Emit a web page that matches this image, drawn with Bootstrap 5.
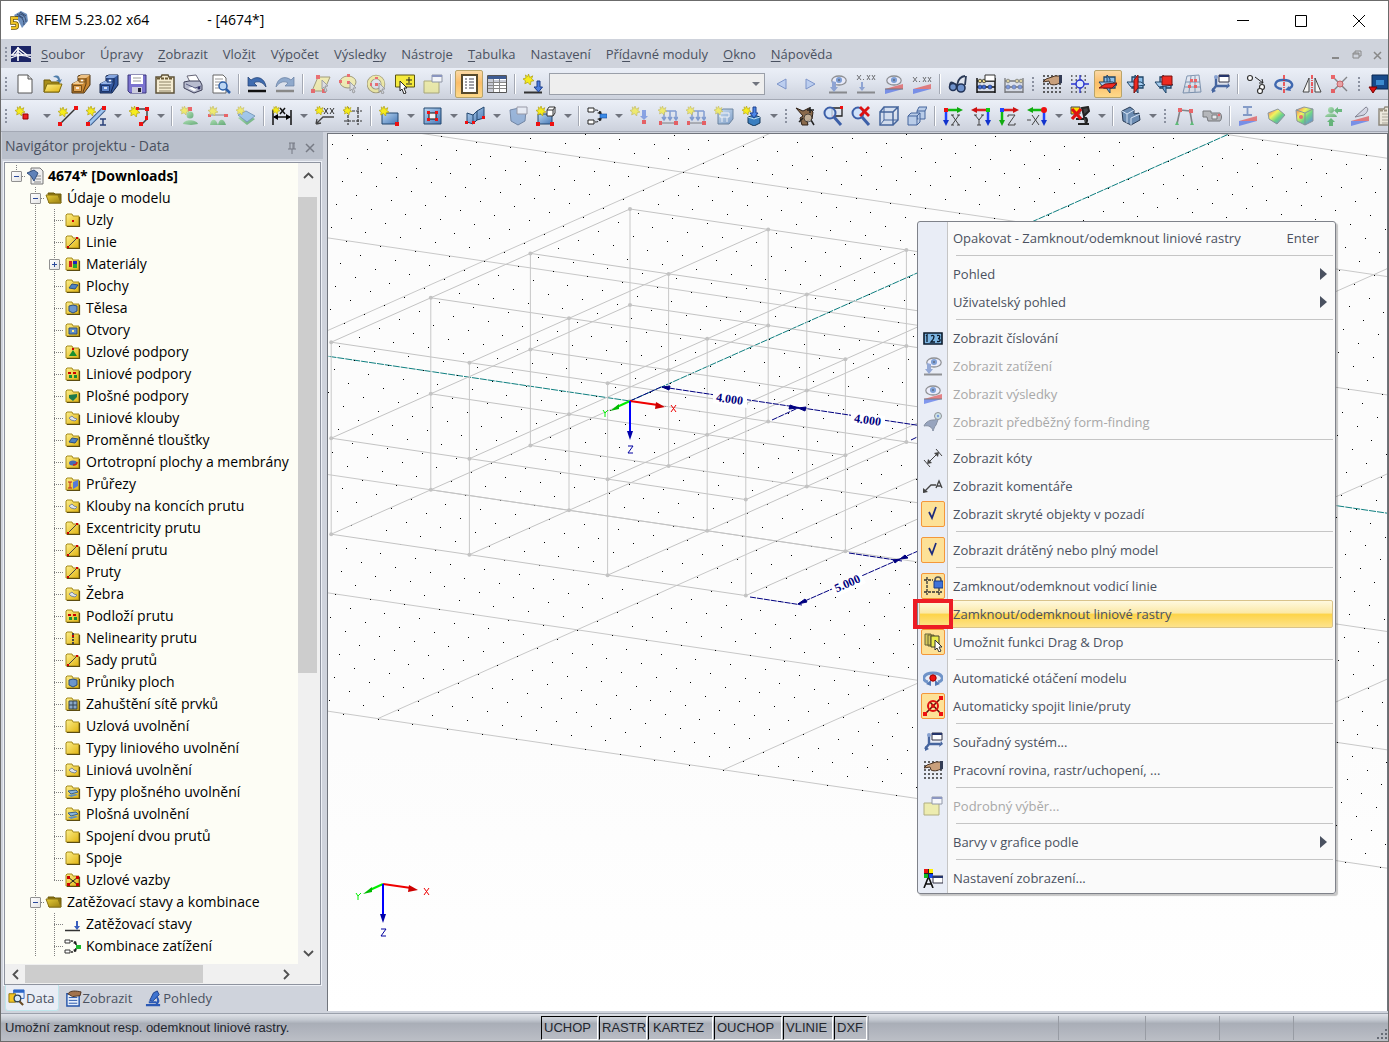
<!DOCTYPE html>
<html lang="cs">
<head>
<meta charset="utf-8">
<meta name="viewport" content="width=device-width, initial-scale=1">
<title>RFEM 5.23.02 x64 - [4674*]</title>
<link href="https://cdn.jsdelivr.net/npm/bootstrap@5.3.0/dist/css/bootstrap.min.css" rel="stylesheet">
<style>
:root{--ink:#4a5160;--face:#cfd3dc;--line:#8e939f}
body{font-family:"Open Sans","Noto Sans",sans-serif;font-size:14px;line-height:20px;color:#000;background:var(--face)}
button{font:inherit;color:inherit;background:none;border:0;padding:0}
.art-store{position:absolute;width:0;height:0}
.app-window{height:100vh;border:1px solid #6b6b6b;overflow:hidden}
.title-bar{height:38px;background:#fff;padding-left:8px}
.title-bar .app-mark{margin-right:6px}
.title-bar .doc-name{margin-left:58px}
.win-btn{width:58px;height:36px}
.menu-strip{height:29px;background:var(--face);color:var(--ink);font-size:13px}
.menu-strip a{color:inherit;text-decoration:none}
.menu-strip u{text-underline-offset:2px}
.menu-links{gap:15px;margin-left:10px}
.mdi-btn{width:21px;height:20px}
.grip-dots{flex:none;width:10px;height:16px;background:radial-gradient(circle,#8b91a0 1px,transparent 1px) 3px 0/4px 4px repeat-y}
.tool-row{height:32px;background:linear-gradient(#ebeff7,#dfe4ee 45%,#ccd1dc);border-bottom:1px solid #a4a9b5;overflow:hidden}
.tool-row .tool-btn{flex:none;width:28px;height:28px;border:1px solid transparent;border-radius:2px}
.tool-btn svg{width:20px;height:20px;display:block;margin:auto}
.tool-btn.is-on{border-color:#b9a46a;background:linear-gradient(#fbd9a6,#fbbd68 45%,#fdd98a)}
.tool-btn.is-off{opacity:.6}
.tool-arrow{flex:none;width:15px;height:28px;display:flex;align-items:center;justify-content:center}
.tool-arrow::after{content:"";border:4px solid transparent;border-top-color:#70747e;border-bottom:0}
.tool-sep{flex:none;width:8px;height:20px;background:linear-gradient(#a4a9b4,#a4a9b4) 3px 0/1px 100% no-repeat,linear-gradient(#fff,#fff) 4px 0/1px 100% no-repeat}
.case-wrap{flex:none;position:relative;height:22px}
.case-wrap::after{content:"";position:absolute;right:8px;top:9px;border:4px solid transparent;border-top-color:#70747e;border-bottom:0;pointer-events:none}
.case-box{display:block;width:216px;height:22px;margin:0 3px 0 2px;border:1px solid #9a9fa9;border-radius:0;background:#eee;appearance:none}
.nav-pane{flex:none;width:322px;margin-right:4px;padding-left:1px}
.nav-head{height:27px;background:#b9bfca;color:var(--ink);padding:0 4px 0 3px}
.nav-head button{width:18px;height:18px}
.tree-frame{border:1px solid #8e939f;outline:1px solid #eef1f7;margin:3px 2px 0 2px;background:#f0f0f0;min-height:0}
.tree-list{background:#fdfdf5;padding:2px 0 0 2px;overflow:hidden;min-width:0}
.tree-line{height:22px;display:flex;align-items:center;white-space:nowrap}
.twig{flex:none;width:19px;height:22px;display:flex;align-items:center;justify-content:center}
.twig.vert{background:repeating-linear-gradient(#808080 0 1px,transparent 1px 2px) 9px 0/1px 100% no-repeat}
.twig.fork{background:repeating-linear-gradient(#808080 0 1px,transparent 1px 2px) 9px 0/1px 100% no-repeat,repeating-linear-gradient(90deg,#808080 0 1px,transparent 1px 2px) 9px 11px/10px 1px no-repeat}
.twig.stop{background:repeating-linear-gradient(#808080 0 1px,transparent 1px 2px) 9px 0/1px 12px no-repeat,repeating-linear-gradient(90deg,#808080 0 1px,transparent 1px 2px) 9px 11px/10px 1px no-repeat}
.twig button{width:11px;height:11px;border:1px solid #919191;border-radius:1px;background:linear-gradient(#2b4a9b,#2b4a9b) 2px 4px/5px 1px no-repeat,linear-gradient(135deg,#fff,#e4e4e4)}
.twig button.shut{background:linear-gradient(#2b4a9b,#2b4a9b) 2px 4px/5px 1px no-repeat,linear-gradient(#2b4a9b,#2b4a9b) 4px 2px/1px 5px no-repeat,linear-gradient(135deg,#fff,#e4e4e4)}
.tree-line svg{flex:none;width:18px;height:18px;margin-right:4px}
.scroll-v{flex:none;width:22px}
.scroll-v .thumb{height:476px;margin-right:3px;background:#cdcdcd}
.scroll-v .step-up{height:34px;padding-bottom:10px}
.scroll-h{flex:none;height:20px;margin-right:24px}
.scroll-h .thumb{height:18px;width:178px;background:#cdcdcd}
.chev{flex:none;width:20px;height:22px;display:flex;align-items:center;justify-content:center}
.nav-tabs-row{height:28px;color:var(--ink);padding-left:3px;font-size:13px}
.nav-tabs-row button{height:26px;padding:0 3px 0 2px;display:flex;align-items:center;gap:1px;border-radius:0 0 3px 3px}
.nav-tabs-row button.is-on{background:#e9edf5;border:1px solid #bfe6ec;border-top:0}
.nav-tabs-row svg{width:17px;height:17px}
.canvas-pane{min-width:0;position:relative;border:1px solid #70747c;border-width:1px 1px 0 1px;margin:1px 0 2px;background:linear-gradient(#fcfcfc 70%,#fff)}
.canvas-pane>svg{display:block;width:100%;height:100%}
.ctx-menu{position:absolute;left:589px;top:87px;width:419px;border:1px solid #7f828a;border-radius:3px;padding:2px 2px 1px 1px;color:var(--ink);font-size:13px;background:linear-gradient(90deg,#e9edf6 29px,#c5c5c5 29px,#c5c5c5 30px,#fafafa 30px);box-shadow:2px 2px 1px rgba(0,0,0,.22)}
.ctx-item{display:flex;align-items:center;width:100%;height:28px;padding:0 13px 0 1px;border:1px solid transparent;border-radius:2px;text-align:left;line-height:20px}
.ctx-item:disabled{color:#a8a8a8}
.ctx-ico{flex:none;width:24px;height:26px;margin-right:8px;display:flex;align-items:center;justify-content:center;border:1px solid transparent;border-radius:2px}
.ctx-ico svg{flex:none;width:20px;height:20px}
.ctx-item:disabled svg{opacity:.6}
.ctx-ico.is-set{background:#fde197;border-color:#f4973a}
.ctx-item.is-hot{background:linear-gradient(#fff9df,#fbe9a8 45%,#fdd44a 52%,#fde38c);border-color:#d9c38a}
.ctx-sub{width:0;height:0;border:6px solid transparent;border-left:7px solid var(--ink);border-right:0;margin-right:-8px}
.ctx-sep{height:8px;margin-left:37px;background:linear-gradient(#c5c5c5,#c5c5c5) 0 3px/100% 1px no-repeat}
.mark-box{position:absolute;left:585px;top:465px;width:40px;height:30px;border:4px solid #ed1c24}
.status-strip{height:28px;font-family:"Liberation Sans",Arial,sans-serif;font-size:13px;color:#22262e;background:linear-gradient(#dfe2e8,#c3c8d0 22%,#a9aeb7 35%,#b0b4bd 60%,#bcbfc6);border-top:1px solid #9aa0ab}
.status-text{width:540px;padding-left:4px}
.snap-key{height:24px;line-height:18px;border:1px solid #000;border-right-color:#fff;border-bottom-color:#fff;overflow:hidden;white-space:nowrap;text-align:left;padding-left:2px;margin-right:1px}
.status-cell{height:24px;border-left:1px solid #989ca4}
</style>
</head>
<body>
<svg class="art-store" aria-hidden="true">
<defs>
<linearGradient id="gy" x2="1" y2="1"><stop stop-color="#fdf08c"/><stop offset="1" stop-color="#e0b310"/></linearGradient>
<linearGradient id="gd" x2="1" y2="1"><stop stop-color="#e6cc3a"/><stop offset="1" stop-color="#9c8010"/></linearGradient>
<linearGradient id="gb" x2="1" y2="1"><stop stop-color="#b9d6f2"/><stop offset="1" stop-color="#4778b5"/></linearGradient>
<linearGradient id="gr" x2="1" y2="1"><stop stop-color="#f00"/><stop offset=".35" stop-color="#ff0"/><stop offset=".6" stop-color="#2c4"/><stop offset="1" stop-color="#23f"/></linearGradient>
<linearGradient id="gg" x2="1" y2="1"><stop stop-color="#8fe08f"/><stop offset="1" stop-color="#1e8a33"/></linearGradient>
</defs>
<symbol id="star" viewBox="0 0 9 9"><path d="M4.500 0 5.500 2.800 8 1.500 7 4 9 5.500 6.500 6 6 9 4 6.800 1.500 8 2 5.500 0 4 2.500 3.300 2 .8 3.800 2.200Z" fill="#f6ec1b" stroke="#b0a010" stroke-width=".6"/></symbol>
<symbol id="eye" viewBox="0 0 20 12"><ellipse cx="10" cy="6" rx="8" ry="5" fill="#eef" stroke="#555" stroke-width="1.400"/><circle cx="10" cy="5.500" r="3.400" fill="#3b6fc4"/><circle cx="10" cy="5.500" r="1.200" fill="#124"/></symbol>
<symbol id="cabo" viewBox="0 0 20 20"><path d="M1 10 7 7V2l3-1h9v10l-6 8H1Z" fill="#c98733" stroke="#4c3210"/><path d="m7 3 3-2h9l-4 3H7Z" fill="#ecc083"/><path d="m1 10 5-3h8l-2 3Z" fill="#f2cd94"/><path d="M15 4v6l-3 8" stroke="#5c3c12" fill="none"/><path d="M8 5h6v3H8ZM2.500 11.500h8v6h-8Z" fill="#e0a558" stroke="#7a5018"/><path d="M5 14h3M10 6.500h2" stroke="#fff" stroke-width="1.500"/></symbol>
<symbol id="cabb" viewBox="0 0 20 20"><path d="M1 10 7 7V2l3-1h9v10l-6 8H1Z" fill="#34589f" stroke="#12244c"/><path d="m7 3 3-2h9l-4 3H7Z" fill="#86a6de"/><path d="m1 10 5-3h8l-2 3Z" fill="#97b4e6"/><path d="M15 4v6l-3 8" stroke="#12244c" fill="none"/><path d="M8 5h6v3H8ZM2.500 11.500h8v6h-8Z" fill="#5d83c8" stroke="#1c3468"/><path d="M5 14h3M10 6.500h2" stroke="#fff" stroke-width="1.500"/></symbol>
<symbol id="app" viewBox="0 0 20 20"><path d="M5 5 12 1l6 3 1 7-6 7-4-8Z" fill="#6d8fbd"/><path d="M8 4l6 4M11 2l6 4M6 7c5-2 9 1 9 8M10 4c4 0 7 3 7 8" stroke="#32466b" fill="none"/><path d="M9 8H3v5h3c3 0 3 5 0 5H2" fill="none" stroke="#6b5200" stroke-width="3.600"/><path d="M9 8H3v5h3c3 0 3 5 0 5H2" fill="none" stroke="#eec426" stroke-width="2.200"/></symbol>
<symbol id="bridge" viewBox="0 0 20 16"><path d="M0 0h20v16H0Z" fill="#1c2566"/><path d="M7 1v14M0 9h20" stroke="#fff" stroke-width="1.600"/><path d="M0 12c6-3 14-3 20 0M7 2 1 9M7 2l9 7M7 5l-3 4M7 5l5 4" stroke="#fff" stroke-width="1.200" fill="none"/></symbol>
<symbol id="new" viewBox="0 0 20 20"><path d="M3 1h10l4 4v14H3Z" fill="#fff" stroke="#555"/><path d="M13 1v4h4" fill="#ddd" stroke="#555"/></symbol>
<symbol id="open" viewBox="0 0 20 20"><path d="M1 6h6l1 2h8v10H1Z" fill="#a98f1a" stroke="#6e5b08"/><path d="M4 10h15l-3 8H1Z" fill="url(#gy)" stroke="#7e6a0c"/><path d="M10 3c4-3 7-1 7 3l2-1-2 4-4-3h2c0-2-2-3-5-3Z" fill="#4f7dab"/></symbol>
<symbol id="save" viewBox="0 0 20 20"><path d="M1 1h18v18H3l-2-2Z" fill="#7b73cf" stroke="#3b367d"/><path d="M4 1h12v9H4Z" fill="#fff"/><path d="M6 4h8M6 7h8" stroke="#999"/><path d="M5 13h10v6H5Z" fill="#ccd"/><path d="M11 14h3v4h-3Z" fill="#223"/></symbol>
<symbol id="note" viewBox="0 0 20 20"><path d="M1 3h5l1-2h6l1 2h5v16H1Z" fill="#f5ecd2" stroke="#5d5138" stroke-width="1.500"/><path d="M2 4.500h16" stroke="#6b5a34" stroke-width="2" stroke-dasharray="3 1"/><path d="M4 8h12M4 11h12M4 14h12M4 17h12" stroke="#8c8267"/></symbol>
<symbol id="print" viewBox="0 0 20 20"><path d="M4 2l9-1 4 7H7Z" fill="#fff" stroke="#667"/><path d="M1 8l5-1h11l2 4v5l-8 3-10-5Z" fill="#b8bccf" stroke="#3e4058"/><path d="M3 10l9 4 6-2" stroke="#555a80" fill="none"/><path d="M5 14l6 3 3-1-5-3Z" fill="#fff"/><circle cx="16" cy="14" r="1.500" fill="#336"/></symbol>
<symbol id="prev" viewBox="0 0 20 20"><path d="M2 1h10l3 3v15H2Z" fill="#fff" stroke="#666"/><path d="M4 5h8M4 8h8M4 11h5M4 14h5" stroke="#999"/><circle cx="12" cy="12" r="4" fill="#bcd6f3" stroke="#2c5fa8" stroke-width="1.500"/><path d="m15 15 4 4" stroke="#2c5fa8" stroke-width="2.500"/></symbol>
<symbol id="undo" viewBox="0 0 20 20"><path d="M1 3v9h9L7 9c3-2 8-2 12 4C18 4 10 1 4 6Z" fill="#3f6cb0" stroke="#1f3d70" stroke-width=".7"/><path d="M1 17h18" stroke="#111" stroke-width="2.500"/></symbol>
<symbol id="redo" viewBox="0 0 20 20"><path d="M19 3v9h-9l3-3C10 7 5 7 1 13 2 4 10 1 16 6Z" fill="#8fa9cc" stroke="#6880a2" stroke-width=".7"/><path d="M1 17h18" stroke="#888" stroke-width="2.500"/></symbol>
<symbol id="selp" viewBox="0 0 20 20"><path d="M7 3h12l-6 14H1Z" fill="#f8ee8d" stroke="#776c30"/><path d="M5 1h4v4H5ZM0 15h4v4H0ZM11 15h4v4h-4Z" fill="#e22"/><path d="m11 6 6 6h-3l2 5-2 1-1-5-2 2Z" fill="#ddd" stroke="#777"/></symbol>
<symbol id="sele" viewBox="0 0 20 20"><ellipse cx="9" cy="8" rx="8" ry="6" fill="#f8ee8d" stroke="#776c30"/><path d="M8 7h3v3H8ZM0 6h3v3H0ZM8 0h3v3H8Z" fill="#e22"/><path d="m11 8 6 6h-3l2 4-2 1-1-4-2 2Z" fill="#ddd" stroke="#777"/></symbol>
<symbol id="selr" viewBox="0 0 20 20"><circle cx="9" cy="10" r="7" fill="none" stroke="#776c30" stroke-width="4.500"/><circle cx="9" cy="10" r="7" fill="none" stroke="#f4e97a" stroke-width="3"/><path d="M8 9h3v3H8ZM3 9h2v3H3ZM8 3h3v2H8Z" fill="#e22"/><path d="m12 9 6 6h-3l2 4-2 1-1-4-2 2Z" fill="#ddd" stroke="#777"/></symbol>
<symbol id="selx" viewBox="0 0 20 20"><path d="M.5 1h19v12H.5Z" fill="#f5ea3c" stroke="#5a5412"/><path d="M14 3v6M11 6h6M11 10h6" stroke="#222"/><path d="m5 7 7 7H9l2 5-2 1-2-5-2 2Z" fill="#fff" stroke="#222"/></symbol>
<symbol id="selw" viewBox="0 0 20 20"><path d="M1 7h15v12H1Z" fill="#f1ec80" stroke="#8b8637"/><path d="M9 1h10v7H9Z" fill="#fff" stroke="#5b6276"/><path d="M9 1h10v2H9Z" fill="#4f5f9e"/></symbol>
<symbol id="list" viewBox="0 0 20 20"><path d="M3 1h15v18H3Z" fill="#fff" stroke="#584a2c" stroke-width="2"/><path d="M6 5h2M6 8h2M6 11h2M6 14h2M10 5h5M10 8h5M10 11h5M10 14h5" stroke="#445"/></symbol>
<symbol id="tabl" viewBox="0 0 20 20"><path d="M.5 1.500h19v17H.5Z" fill="#fff" stroke="#555"/><path d="M1 2h18v3H1Z" fill="#3e5c93"/><path d="M1 5h5v13H1ZM1 6h18v2H1Z" fill="#c9ccd6"/><path d="M1 8.500h18M1 11.500h18M1 14.500h18M6.500 5v13M12.500 5v13" stroke="#888"/></symbol>
<symbol id="ldnew" viewBox="0 0 20 20"><use href="#star" x="0" width="11" height="11"/><path d="M1 18.500h18" stroke="#333" stroke-width="2"/><path d="M14 7v6h-3l4.500 5 4-5H17V7Z" fill="#4a7de0" stroke="#1d3f8c"/></symbol>
<symbol id="pv" viewBox="0 0 20 20"><path d="M14 5v10l-9-5Z" fill="#a7c2f2" stroke="#3e62b4"/></symbol>
<symbol id="nx" viewBox="0 0 20 20"><path d="M6 5v10l9-5Z" fill="#a7c2f2" stroke="#3e62b4"/></symbol>
<symbol id="eyel" viewBox="0 0 20 20"><use href="#eye" x="2" y="1" width="18" height="11"/><path d="M1 18.500h18" stroke="#555" stroke-width="2"/><path d="M4 7v6H2l4 5 4-5H8V8Z" fill="#5c7cc4"/></symbol>
<symbol id="xxl" viewBox="0 0 20 20"><path d="m1 1 4 5M5 1 1 6M11 1l3 5M14 1l-3 5M16 1l3 5M19 1l-3 5M7 5.500h1" stroke="#222"/><path d="M1 18.500h18" stroke="#555" stroke-width="2"/><path d="M5 8v5H3l3 4 3-4H7V8Z" fill="#5c7cc4"/></symbol>
<symbol id="eyer" viewBox="0 0 20 20"><use href="#eye" x="1" y="1" width="18" height="11"/><path d="M1 15h18v-5Z" fill="#e23b3b"/><path d="M1 15h18L1 20Z" fill="#3c5fe8"/><path d="M1 15h18" stroke="#333"/></symbol>
<symbol id="xxr" viewBox="0 0 20 20"><path d="m1 3 4 5M5 3 1 8M11 3l3 5M14 3l-3 5M16 3l3 5M19 3l-3 5M7 7.500h1" stroke="#222"/><path d="M1 15h18v-5Z" fill="#e23b3b"/><path d="M1 15h18L1 20Z" fill="#3c5fe8"/></symbol>
<symbol id="glas" viewBox="0 0 20 20"><path d="M2 12c0-8 6 0 7-1s0-8 8-9M18 2l-1 9" fill="none" stroke="#2b3a57" stroke-width="1.800"/><circle cx="5" cy="13" r="3.500" fill="#6f92cc" stroke="#223458" stroke-width="1.600"/><circle cx="13" cy="14" r="4" fill="#6f92cc" stroke="#223458" stroke-width="1.600"/></symbol>
<symbol id="abac" viewBox="0 0 20 20"><path d="M1 4v15M19 4v15M1 7h18M1 13h18M1 18h18" stroke="#111" stroke-width="1.500"/><g fill="#3f6cd6" stroke="#14285e" stroke-width=".6"><circle cx="4" cy="13" r="2"/><circle cx="8" cy="13" r="2"/><circle cx="14" cy="13" r="2"/></g><g fill="#f0dc8c" stroke="#554"><circle cx="4" cy="7" r="1.800"/><circle cx="8" cy="7" r="1.800"/></g><path d="M9 1h10v6H9Z" fill="#fff" stroke="#333"/></symbol>
<symbol id="abac2" viewBox="0 0 20 20"><path d="M1 4v15M19 4v15M1 7h18M1 13h18M1 18h18" stroke="#333" stroke-width="1.300"/><g fill="#3f6cd6" stroke="#14285e" stroke-width=".6"><circle cx="4" cy="13" r="2"/><circle cx="10" cy="13" r="2"/><circle cx="16" cy="13" r="2"/></g><g fill="#d8c46c" stroke="#554"><circle cx="4" cy="7" r="1.800"/><circle cx="13" cy="7" r="1.800"/><circle cx="17" cy="7" r="1.800"/></g></symbol>
<symbol id="hand" viewBox="0 0 20 20"><path d="M1 2h18M1 6h18M1 10h18M1 14h18M1 18h18" stroke="#333" stroke-width="1.600" stroke-dasharray="2 2"/><path d="M20 2 13 2 4 5l-3 3 6-1 1 3c4 2 8 0 12-2Z" fill="#c9a07c" stroke="#4a3424"/><path d="M17 1h3v8l-3 1Z" fill="#333c55"/></symbol>
<symbol id="snap" viewBox="0 0 20 20"><path d="M1 2h18M1 6h18M1 14h18M1 18h18" stroke="#444" stroke-width="1.500" stroke-dasharray="1.500 3"/><path d="M10 1v18M1 10h18" stroke="#2b36d0" stroke-width="1.300"/><circle cx="10" cy="10" r="4" fill="#dfe9fb" stroke="#2b36d0" stroke-width="1.500"/></symbol>
<symbol id="pl" viewBox="0 0 20 20"><path d="M6 3h11v11H6Z" fill="#8fc0ea" stroke="#1f4467" stroke-width="1.300"/><path d="M9 1 12 5v14l-3-4Z" fill="#6ea6da" stroke="#1f4467"/><path d="m1 8 14 0 4 3-14 2Z" fill="#a5cdf0" stroke="#1f4467"/></symbol>
<symbol id="plh" viewBox="0 0 20 20"><use href="#pl"/><path d="m1 14 6-4 12-1-5 5Z" fill="#ee2b22" stroke="#7a1210"/></symbol>
<symbol id="plv" viewBox="0 0 20 20"><use href="#pl"/><path d="m8 6 4-5v13l-4 5Z" fill="#ee2b22" stroke="#7a1210"/></symbol>
<symbol id="plf" viewBox="0 0 20 20"><use href="#pl"/><path d="M8 2h10v9H8Z" fill="#ee2b22" stroke="#7a1210"/></symbol>
<symbol id="grd" viewBox="0 0 20 20"><path d="m1 19 4-17 12-1 2 17ZM4 8h14M3 13h15M9 2 7 18M13 2v16" fill="none" stroke="#3f6088"/><path d="M8 5h3v3H8ZM6 11h3v3H6ZM12 11h3v3h-3ZM12 5h3v3h-3Z" fill="#e11"/></symbol>
<symbol id="axes" viewBox="0 0 20 20"><path d="M6 3v9l-4 5M6 12h11" stroke="#46659f" stroke-width="2.400" fill="none"/><path d="M2 19v-5l4 3ZM18 9l2 3-4 3Z" fill="#46659f"/><circle cx="6" cy="3" r="2" fill="#87a1d0"/><path d="M9 1h10v7H9Z" fill="#fff" stroke="#334"/><path d="M9 1h10v2H9Z" fill="#25356b"/></symbol>
<symbol id="cir" viewBox="0 0 20 20"><g fill="#fff" stroke="#333" stroke-width="1.200"><circle cx="4" cy="4" r="2.500"/><circle cx="16" cy="13" r="2.500"/><circle cx="14" cy="17" r="2.500"/></g><path d="m9 3 8 6M17 9l-1-4M17 9h-4" stroke="#222" fill="none"/></symbol>
<symbol id="rot" viewBox="0 0 20 20"><path d="M8 15C-2 14 0 6 9 6c10 0 12 7 5 9" fill="none" stroke="#3f68b0" stroke-width="2.400"/><path d="m15 12-4 4 6 1Z" fill="#3f68b0"/><path d="M10 1v18" stroke="#e11" stroke-width="1.300" stroke-dasharray="4 1 1 1"/></symbol>
<symbol id="mir" viewBox="0 0 20 20"><path d="M10 1v18" stroke="#e11" stroke-width="1.300" stroke-dasharray="4 1 1 1"/><path d="M7 4v14H1ZM13 4v14h6Z" fill="#f5f5f5" stroke="#444"/></symbol>
<symbol id="tie" viewBox="0 0 20 20"><path d="M3 3l7 7 7-7M3 17l7-7 7 7" stroke="#444" stroke-width="1.400" fill="none"/><path d="M1 1h4v4H1ZM1 15h4v4H1Z" fill="#e11"/><circle cx="10" cy="10" r="3" fill="#e77" stroke="#b11"/></symbol>
<symbol id="scr" viewBox="0 0 20 20"><path d="M4 1h16v14H4Z" fill="#174a8a" stroke="#0b2750"/><path d="M8 6h8v5H8Z" fill="#3b8bd0"/><path d="M1 13h8l-4 6Z" fill="#d11" stroke="#700"/></symbol>
<symbol id="nod" viewBox="0 0 20 20"><use href="#star" width="10" height="10"/><path d="M8 8h5v5H8Z" fill="#e22" stroke="#900"/></symbol>
<symbol id="lin" viewBox="0 0 20 20"><use href="#star" y="1" width="10" height="10"/><path d="M2 18 18 2" stroke="#333" stroke-width="1.500"/><path d="M0 16h4v4H0ZM16 0h4v4h-4Z" fill="#e11"/></symbol>
<symbol id="mem" viewBox="0 0 20 20"><path d="M3 18 18 3" stroke="#3c5d8e" stroke-width="5"/><path d="M3 18 18 3" stroke="#9fc4ee" stroke-width="3"/><use href="#star" width="10" height="10"/><path d="M0 16h4v4H0ZM16 0h4v4h-4Z" fill="#e11"/><path d="M14 13h6M14 19h6M17 13v6" stroke="#2a417a" stroke-width="1.500"/></symbol>
<symbol id="ply" viewBox="0 0 20 20"><path d="M7 3h11v10l-5 5" stroke="#444" stroke-width="1.500" fill="none"/><use href="#star" width="11" height="11"/><path d="M7 1h3v3H7ZM16 1h4v4h-4ZM16 10h3v4h-3ZM10 16h4v4h-4Z" fill="#e11"/></symbol>
<symbol id="sup" viewBox="0 0 20 20"><path d="M8 1h4v4H8Z" fill="#e11"/><circle cx="10" cy="9" r="3.500" fill="url(#gg)"/><path d="M3 18c1-5 13-5 15 0l-7 1Z" fill="url(#gg)"/><use href="#star" width="9" height="9"/></symbol>
<symbol id="sul" viewBox="0 0 20 20"><path d="M1 9h18" stroke="#555"/><path d="M0 8h3v3H0ZM16 8h4v3h-4Z" fill="#e11"/><path d="M2 19c1-7 6-7 8 0ZM10 19c1-7 6-7 8 0Z" fill="url(#gg)"/><use href="#star" width="10" height="10"/></symbol>
<symbol id="suf" viewBox="0 0 20 20"><path d="m2 12 8-4 9 5-8 6Z" fill="url(#gg)"/><path d="m2 9 8-4 9 5-8 6Z" fill="#7bb4e6" stroke="#3b6f9f"/><use href="#star" width="9" height="9"/></symbol>
<symbol id="dim" viewBox="0 0 20 20"><path d="M1 4v15M19 4v15M2 11h16" stroke="#111" stroke-width="1.500"/><path d="m1 11 5-3v6ZM19 11l-5-3v6Z"/><path d="m8 2 5 6M13 2 8 8" stroke="#111" stroke-width="1.500"/><use href="#star" width="8" height="8"/></symbol>
<symbol id="com" viewBox="0 0 20 20"><path d="m1 18 7-7h11M1 18l1-5M1 18l5-1" stroke="#444" fill="none" stroke-width="1.300"/><path d="m9 2 4 6M13 2 9 8M15 2l4 6M19 2l-4 6" stroke="#333"/><use href="#star" width="9" height="9"/></symbol>
<symbol id="gui" viewBox="0 0 20 20"><path d="M5 1v18M15 1v18M1 5h18M1 15h18" stroke="#333" stroke-width="1.200" stroke-dasharray="3 1"/><use href="#star" width="9" height="9"/></symbol>
<symbol id="surf" viewBox="0 0 20 20"><path d="M3 7h16v11H3Z" fill="url(#gb)" stroke="#23466e"/><use href="#star" width="10" height="10"/><path d="M16 16h4v4h-4Z" fill="#e11"/></symbol>
<symbol id="opn" viewBox="0 0 20 20"><path d="M2 2h17v16H2Z" fill="url(#gb)" stroke="#23466e"/><path d="M7 7h7v6H7Z" fill="#f1f3f8" stroke="#111"/><path d="M5 5h3v3H5ZM13 5h3v3h-3ZM5 12h3v3H5ZM13 12h3v3h-3Z" fill="#e11"/></symbol>
<symbol id="bend" viewBox="0 0 20 20"><path d="m2 7 6 2 4-4 7-4v11l-7 2-4 4-6-2Z" fill="url(#gb)" stroke="#23466e"/><path d="M8 9v8M12 5v9" stroke="#23466e"/><path d="M0 15h3v3H0ZM7 15h3v3H7ZM17 10h3v3h-3Z" fill="#e11"/></symbol>
<symbol id="sol" viewBox="0 0 20 20"><path d="m2 4 9-2 7 2-1 11-7 4-7-4Z" fill="#6c96cc" stroke="#2f4c78"/><path d="M9 1h10v7H9Z" fill="#e8ecf5" stroke="#667"/></symbol>
<symbol id="cube1" viewBox="0 0 20 20"><path d="M2 8h14v10H2Z" fill="url(#gb)" stroke="#23466e"/><path d="M11 4h6v6h-6ZM11 4l2-3h6l-2 3M19 1v6l-2 3" fill="#fff" stroke="#333"/><use href="#star" width="10" height="10"/><path d="M0 16h4v4H0ZM14 16h4v4h-4Z" fill="#e11"/></symbol>
<symbol id="comb" viewBox="0 0 20 20"><path d="M1 2h6v4H1ZM1 14h6v4H1Z" fill="#fff" stroke="#222"/><path d="M8 4c5 0 5 2 6 5M8 16c5 0 5-2 6-5" stroke="#222" stroke-dasharray="3 1" fill="none"/><path d="m15 9-5-2 4-2ZM15 11l-5 2 4 2Z" fill="#222"/><path d="M13 8h7v4h-7Z" fill="#3a8ae8" stroke="#1a4a98" stroke-width=".6"/></symbol>
<symbol id="lod" viewBox="0 0 20 20"><use href="#star" width="10" height="10"/><path d="M12 4v6h-2l4 4 4-4h-2V4Z" fill="#4f76dc"/><path d="M12 14h4v4h-4Z" fill="#e11"/></symbol>
<symbol id="lodl" viewBox="0 0 20 20"><path d="M5 5h13M6 5v8M12 5v8M18 5v8M4 11l2 3 2-3M10 11l2 3 2-3M16 11l2 3 2-3" stroke="#466fc0" stroke-width="1.500" fill="none"/><path d="M2 17h17" stroke="#444"/><path d="M1 15h3v4H1ZM16 15h4v4h-4Z" fill="#e11"/><use href="#star" width="9" height="9"/></symbol>
<symbol id="lods" viewBox="0 0 20 20"><path d="m4 6 5-3h10v10l-4 5H4Z" fill="url(#gb)" stroke="#23466e"/><path d="M6 7h9v4H6ZM8 11v5M13 11v5" stroke="#fff" fill="none"/><use href="#star" width="9" height="9"/></symbol>
<symbol id="lodc" viewBox="0 0 20 20"><path d="m6 11 6-2 6 2v6l-6 3-6-3Z" fill="#3b7fc0" stroke="#163a5e"/><path d="m6 11 6 2 6-2" stroke="#bde" fill="none"/><path d="M11 1v6H8l4 5 4-5h-2V1Z" fill="#4a86e8" stroke="#1d3f8c"/><use href="#star" width="9" height="9"/></symbol>
<symbol id="grab" viewBox="0 0 20 20"><path d="M1 2 8 5l6-3 4 4-1 7-5 2 1 4H7l-2-7 3-2Z" fill="#8a6a4c" stroke="#2f2117"/><path d="M15 1v6M12 4h7M4 16l4-4M16 14l3 5" stroke="#222" stroke-width="1.500"/><circle cx="13" cy="12" r="4" fill="#d9cbb7" opacity=".7" stroke="#333"/></symbol>
<symbol id="zmw" viewBox="0 0 20 20"><path d="M9 2h10v8H9Z" fill="none" stroke="#222" stroke-width="1.300"/><path d="M17 0h3v3h-3ZM9 9h3v3H9Z" fill="#e11"/><circle cx="7" cy="7" r="5.500" fill="#cfe2fa" fill-opacity=".8" stroke="#3c5fa8" stroke-width="2"/><path d="m11 11 7 8" stroke="#3c5fa8" stroke-width="3"/></symbol>
<symbol id="zmx" viewBox="0 0 20 20"><circle cx="7" cy="7" r="5.500" fill="#cfe2fa" stroke="#3c5fa8" stroke-width="2"/><path d="m11 11 7 8" stroke="#3c5fa8" stroke-width="3"/><path d="m9 1 9 9M18 1 9 10" stroke="#d11" stroke-width="2.800"/></symbol>
<symbol id="wcub" viewBox="0 0 20 20"><path d="M1 6h13v13H1ZM1 6l4-5h14l-5 5M19 1v13l-5 5" fill="#cfdcf0" fill-opacity=".7" stroke="#45659c" stroke-width="1.500"/><path d="M5 1v13h14M5 14l-4 5" stroke="#45659c" fill="none"/></symbol>
<symbol id="ccub" viewBox="0 0 20 20"><path d="M10 5h8v8h-8ZM10 5l2-4h8l-2 4" fill="#b9cce8" stroke="#45659c"/><path d="M1 10h9v9H1ZM1 10l3-3h9l-3 3M13 7v9l-3 3" fill="#b9cce8" stroke="#45659c"/></symbol>
<symbol id="vwx" viewBox="0 0 20 20"><path d="M2 4h13" stroke="#1b1" stroke-width="2.500"/><path d="m14 1 6 3-6 3Z" fill="#1a1"/><path d="M3 4v11" stroke="#24f" stroke-width="2.500"/><path d="m0 14 3 6 3-6Z" fill="#13c"/><path d="M1 2h4v4H1Z" fill="#e11"/><path d="m9 9 7 10M16 9 9 19M8 9h3M14 9h3M8 19h3M14 19h3" stroke="#444"/></symbol>
<symbol id="vwy" viewBox="0 0 20 20"><path d="M18 4H6" stroke="#d22" stroke-width="2.500"/><path d="M6 1 0 4l6 3Z" fill="#c11"/><path d="M17 4v11" stroke="#24f" stroke-width="2.500"/><path d="m14 14 3 6 3-6Z" fill="#13c"/><path d="M15 2h4v4h-4Z" fill="#1c1"/><path d="m4 9 4 5 4-5M8 14v5M6 19h4M3 9h3M10 9h3" stroke="#444" fill="none"/></symbol>
<symbol id="vwz" viewBox="0 0 20 20"><path d="M2 4h13" stroke="#d22" stroke-width="2.500"/><path d="m14 1 6 3-6 3Z" fill="#c11"/><path d="M3 4v11" stroke="#1b1" stroke-width="2.500"/><path d="m0 14 3 6 3-6Z" fill="#1a1"/><path d="M1 2h4v4H1Z" fill="#24f"/><path d="M9 11V9h7L9 19h7v-2" stroke="#444" fill="none"/></symbol>
<symbol id="vwn" viewBox="0 0 20 20"><path d="M17 4H6" stroke="#1b1" stroke-width="2.500"/><path d="M6 1 0 4l6 3Z" fill="#1a1"/><path d="M17 4v11" stroke="#24f" stroke-width="2.500"/><path d="m14 14 3 6 3-6Z" fill="#13c"/><circle cx="17" cy="4" r="3" fill="#e11"/><path d="m5 9 7 10M12 9 5 19M0 14h4" stroke="#444"/></symbol>
<symbol id="micr" viewBox="0 0 20 20"><path d="M1 1h9v7H1Z" fill="#fd0" stroke="#444"/><path d="m12 2 6-1 1 4-5 5ZM8 18h11M13 10c5 2 5 6 2 8M6 13h8" stroke="#222" stroke-width="2" fill="#444"/><path d="m2 3 9 10M11 3 2 13" stroke="#d11" stroke-width="3.200"/></symbol>
<symbol id="blk" viewBox="0 0 20 20"><path d="m1 5 8-4 4 3v4l5-1 1 7-9 5-8-4Z" fill="#6d8db3" stroke="#2a3d57"/><path d="m1 5 5 3v9M6 8l7-4M10 12l9-4M10 12v7" stroke="#d5e3f5" fill="none"/></symbol>
<symbol id="frm" viewBox="0 0 20 20"><path d="M3 18 6 4l10 1 2 12" fill="none" stroke="#444" stroke-width="1.600"/><path d="M4 2h4v4H4ZM15 3h4v4h-4Z" fill="#e11"/><path d="m1 19 2-4 2 4ZM16 19l2-4 2 4Z" fill="#1a3"/></symbol>
<symbol id="tube" viewBox="0 0 20 20"><path d="M1 5h8v2h9c2 2 2 6 0 8H6L5 11H1Z" fill="#999" stroke="#333"/><path d="M10 9h5v4h-5Z" fill="#eee" stroke="#333"/><circle cx="17" cy="9" r="1.300" fill="#e11"/></symbol>
<symbol id="isec" viewBox="0 0 20 20"><path d="M5 1h9M5 9h9M9.500 1v8" stroke="#4669ad" stroke-width="1.800"/><path d="M1 15h18v-5Z" fill="#e23b3b"/><path d="M1 15h18L1 20Z" fill="#3c5fe8"/></symbol>
<symbol id="rain" viewBox="0 0 20 20"><path d="m2 7 10-4 7 6-8 9-8-5Z" fill="url(#gr)" stroke="#566"/></symbol>
<symbol id="rcub" viewBox="0 0 20 20"><path d="m2 4 8-3 9 2v12l-8 4-8-4Z" fill="url(#gr)" stroke="#566"/><path d="m2 4 9 3 8-4M11 7v12" stroke="#466" fill="none"/><circle cx="7" cy="11" r="2" fill="#e22"/></symbol>
<symbol id="supr" viewBox="0 0 20 20"><circle cx="9" cy="4" r="3" fill="url(#gg)"/><path d="M3 11c1-5 11-5 12 0Z" fill="url(#gg)"/><path d="M7 20v-4H5l4-4 4 4h-2v4ZM20 3h-4V1l-4 3.500L16 8V6h4Z" fill="#1d9b35"/></symbol>
<symbol id="knif" viewBox="0 0 20 20"><path d="M5 11 16 1c3 1 2 5-2 8Z" fill="#ccd" stroke="#445"/><path d="M1 15h18v-5Z" fill="#e23b3b"/><path d="M1 15h18L1 20Z" fill="#3c5fe8"/></symbol>
<symbol id="n123" viewBox="0 0 20 20"><path d="M1 5h18v11H1Z" fill="#7cb5e2" stroke="#0b1a2b" stroke-width="1.600"/><path d="M3 8l1-1v7M8 8c4-2 4 2 0 6h4M14 7.500c4-1 3 3 1 3 3 0 3 4-1 3" stroke="#0b1a2b" stroke-width="1.300" fill="none"/></symbol>
<symbol id="form" viewBox="0 0 20 20"><path d="M1 14C3 9 8 8 10 8c4 0 3-2 6-3l-3 8c-2 2-2 4-3 6-1-4-4-6-9-5Z" fill="#61759a" stroke="#43516a"/><circle cx="15" cy="4" r="3.500" fill="#bdd" stroke="#555"/><circle cx="15" cy="4" r="1.200" fill="#36c"/></symbol>
<symbol id="dimd" viewBox="0 0 20 20"><path d="m5 15 10-10M1 12l6 7M13 1l6 7" stroke="#444"/><path d="m4 16 1-5 4 4ZM16 4l-1 5-4-4Z" fill="#444"/></symbol>
<symbol id="coma" viewBox="0 0 20 20"><path d="m1 16 7-7h5" stroke="#444" stroke-width="1.300" fill="none"/><path d="M0 17v-5l5 4Z" fill="#444"/><path d="m13 12 3-7 3 7M14 10h4" fill="none" stroke="#444" stroke-width="1.300"/></symbol>
<symbol id="tick" viewBox="0 0 20 20"><path d="m6 8 3 6 4-11" stroke="#1c2a7c" stroke-width="1.700" fill="none"/></symbol>
<symbol id="lock" viewBox="0 0 20 20"><path d="M4 1v18M1 16h18M1 4h9M16 12v8" stroke="#333" stroke-width="1.300" stroke-dasharray="3 1"/><path d="M12 6V4c0-4 6-4 6 0v2" fill="none" stroke="#555" stroke-width="1.600"/><path d="M11 5h9v7h-9Z" fill="#3f72d8" stroke="#1c3b80"/></symbol>
<symbol id="drag" viewBox="0 0 20 20"><path d="M2 2h6v11H2ZM5 3h6v11H5Z" fill="#d3c75b" stroke="#6a6538"/><path d="M8 4h8v11H8Z" fill="#e8ea4a" stroke="#43422a"/><path d="m12 8 7 7h-3l2 4-2 1-2-4-2 2Z" fill="#fff" stroke="#333"/></symbol>
<symbol id="spin" viewBox="0 0 20 20"><path d="M5 14C-3 12 1 5 10 5s13 7 5 9" fill="none" stroke="#6f93c8" stroke-width="3"/><path d="M12 12v6l5-2ZM8 12v6l-5-2Z" fill="#5379b5"/><circle cx="10" cy="10" r="3.200" fill="#e11" stroke="#900"/></symbol>
<symbol id="conn" viewBox="0 0 20 20"><path d="m2 18 16-16M7 6l11 12" stroke="#5a1512" stroke-width="1.600"/><circle cx="10" cy="10" r="5" fill="none" stroke="#d11" stroke-width="2"/><circle cx="10" cy="10" r="2" fill="#d11"/><path d="M0 16h4v4H0ZM16 0h4v4h-4ZM16 16h4v4h-4Z" fill="#e11"/></symbol>
<symbol id="disp" viewBox="0 0 20 20"><path d="M1 1h9v9H1Z" fill="#222"/><path d="M1 1h4v4H1Z" fill="#e11"/><path d="M6 1h4v4H6Z" fill="#fe0"/><path d="M1 6h4v4H1Z" fill="#1b2"/><path d="M6 6h4v4H6Z" fill="#14e"/><path d="m5 10-4 10M6 10l4 10M3 16h5" stroke="#111" stroke-width="1.600"/><path d="M10 8h10v7H10Z" fill="#fff" stroke="#334"/><path d="M10 8h10v2H10Z" fill="#25356b"/></symbol>
<symbol id="fold" viewBox="0 0 18 18"><path d="M2 4 3 3h5l1 2h6v10H2Z" fill="url(#gy)" stroke="#a58a1c"/><path d="M3 15.500h12.500V6" stroke="#5c4c10" stroke-width="1.200" fill="none"/></symbol>
<symbol id="fopn" viewBox="0 0 18 18"><path d="M3 4h6l1 1h6v9H4Z" fill="#8a7210" stroke="#6d5a0a"/><path d="M1 6h12l3 8H4Z" fill="url(#gd)" stroke="#8a7416"/></symbol>
<symbol id="root" viewBox="0 0 18 18"><path d="M5 1h9l3 3v13H5Z" fill="#eee" stroke="#777"/><path d="M10 9h5M10 12h5M8 15h7" stroke="#888"/><path d="M1 6 8 3l4 3-4 8-3-5Z" fill="#5f82b8" stroke="#33507e"/></symbol>
<symbol id="load" viewBox="0 0 18 18"><path d="M1 15.500h15" stroke="#333" stroke-width="1.500"/><path d="M12 6h2v5h2l-3 4-3-4h2Z" fill="#3a5fbd"/></symbol>
<symbol id="combt" viewBox="0 0 18 18"><path d="M1 3h5v3H1ZM1 13h5v3H1Z" fill="#fff" stroke="#333"/><path d="M7 4c4 0 5 2 5 4M7 15c4 0 5-2 5-4" stroke="#222" stroke-width="1.300" stroke-dasharray="2 1" fill="none"/><path d="m13 8-4-2 3-2ZM13 11l-4 2 3 2Z" fill="#222"/><path d="M12 8h5v4h-5Z" fill="#1cb82c"/></symbol>
<symbol id="tdata" viewBox="0 0 18 18"><path d="M6 1h11v9H6Z" fill="#e8f0fc" stroke="#2b66c8"/><path d="M6 1h11v3H6Z" fill="#2b66c8"/><path d="M1 5h7v9H1Z" fill="#f4c522" stroke="#8e7410"/><circle cx="10" cy="10" r="3.500" fill="#d8ebfa" stroke="#345" stroke-width="1.400"/><path d="m12 13 4 4" stroke="#6a4a22" stroke-width="2.200"/></symbol>
<symbol id="tshow" viewBox="0 0 18 18"><path d="M2 4h13v13H2Z" fill="#e6effc" stroke="#2453a8" stroke-width="1.500"/><path d="M4 8h9M4 11h9M4 14h9" stroke="#2453a8"/><path d="M3 4c3-4 9-3 14-2l-1 4-8 1Z" fill="#a2734c" stroke="#4c3220"/></symbol>
<symbol id="tview" viewBox="0 0 18 18"><path d="m9 3 4-2 2 4-7 7-3-1Z" fill="#3f74d0" stroke="#1d3f8c"/><path d="M1 16h15M12 7c3 3 2 6 0 8M4 13h8" stroke="#2b59b5" stroke-width="2.200" fill="none"/></symbol>
</svg>

<div class="app-window d-flex flex-column">
  <header class="title-bar d-flex align-items-center flex-shrink-0">
    <svg width="20" height="20" class="app-mark"><use href="#app"/></svg><span>RFEM 5.23.02 x64</span><span class="doc-name">- [4674*]</span>
    <div class="ms-auto d-flex">
      <button class="win-btn" aria-label="Minimalizovat"><svg width="12" height="12"><path d="M0 5.500h12" stroke="#000"/></svg></button>
      <button class="win-btn" aria-label="Maximalizovat"><svg width="12" height="12"><path d="M.5.500h11v11H.5Z" stroke="#000" fill="none"/></svg></button>
      <button class="win-btn" aria-label="Zavřít"><svg width="12" height="12"><path d="m0 0 12 12M12 0 0 12" stroke="#000"/></svg></button>
    </div>
  </header>

  <nav class="menu-strip d-flex align-items-center flex-shrink-0">
    <span class="grip-dots"></span><svg width="20" height="16"><use href="#bridge"/></svg>
    <div class="menu-links d-flex">
      <a href="#"><u>S</u>oubor</a><a href="#">Úpr<u>a</u>vy</a><a href="#"><u>Z</u>obrazit</a><a href="#">Vlož<u>i</u>t</a><a href="#">Vý<u>p</u>očet</a><a href="#">Výsled<u>k</u>y</a><a href="#">Nástro<u>j</u>e</a><a href="#"><u>T</u>abulka</a><a href="#">Nasta<u>v</u>ení</a><a href="#">Pří<u>d</u>avné moduly</a><a href="#"><u>O</u>kno</a><a href="#"><u>N</u>ápověda</a>
    </div>
    <div class="ms-auto d-flex">
      <button class="mdi-btn" aria-label="Minimalizovat okno"><svg width="10" height="10"><path d="M1 8h7" stroke="#888" stroke-width="2"/></svg></button>
      <button class="mdi-btn" aria-label="Obnovit okno"><svg width="10" height="10"><path d="M3 3V1h6v5H7M1 3h6v5H1ZM1 4h6" stroke="#888" fill="none"/></svg></button>
      <button class="mdi-btn" aria-label="Zavřít okno"><svg width="10" height="10"><path d="m1 2 7 7M8 2 1 9" stroke="#888" stroke-width="1.500"/></svg></button>
    </div>
  </nav>

  <div class="tool-row d-flex align-items-center flex-shrink-0" id="bar1"></div>
  <div class="tool-row d-flex align-items-center flex-shrink-0" id="bar2"></div>

  <main class="d-flex flex-grow-1 overflow-hidden">
    <aside class="nav-pane d-flex flex-column">
      <div class="nav-head d-flex align-items-center flex-shrink-0"><span>Navigátor projektu - Data</span>
        <button class="ms-auto" aria-label="Připnout"><svg width="10" height="12"><path d="M2 1h6M3 1v6M7 1v6M6 1v6M1 7h8M5 7v5" stroke="#777b85"/></svg></button>
        <button aria-label="Zavřít panel"><svg width="10" height="10"><path d="m1 1 8 8M9 1 1 9" stroke="#777b85" stroke-width="1.500"/></svg></button></div>
      <div class="tree-frame d-flex flex-column flex-grow-1">
        <div class="d-flex flex-grow-1 overflow-hidden">
          <div class="tree-list flex-grow-1" id="tree"></div>
          <div class="scroll-v d-flex flex-column"><div class="chev step-up"><svg width="11" height="7"><path d="m1 6 4.500-4.500L10 6" fill="none" stroke="#505050" stroke-width="1.800"/></svg></div><div class="thumb"></div><div class="chev mt-auto"><svg width="11" height="7"><path d="m1 1 4.500 4.500L10 1" fill="none" stroke="#505050" stroke-width="1.800"/></svg></div></div>
        </div>
        <div class="scroll-h d-flex align-items-center"><span class="chev"><svg width="7" height="11"><path d="M6 1 1.500 5.500 6 10" fill="none" stroke="#505050" stroke-width="1.800"/></svg></span><div class="thumb"></div><span class="chev ms-auto"><svg width="7" height="11"><path d="m1 1 4.500 4.500L1 10" fill="none" stroke="#505050" stroke-width="1.800"/></svg></span></div>
      </div>
      <div class="nav-tabs-row d-flex flex-shrink-0 gap-1">
        <button class="is-on"><svg><use href="#tdata"/></svg>Data</button><button><svg><use href="#tshow"/></svg>Zobrazit</button><button class="ms-1"><svg><use href="#tview"/></svg>Pohledy</button>
      </div>
    </aside>

    <section class="canvas-pane flex-grow-1">
      <svg aria-label="Model"><g transform="translate(302 267)">
        <g id="lattice"></g>
        <g id="frame" fill="none" stroke="#c3c3c3"></g>
        <g stroke="#000080" fill="#000080">
          <path d="M0 0 31-14M32-14 306 27M142 19 168 7M281 39 306 27M120 196 172 204M219 152 272 160M168 203 270 158 340 127" fill="none" stroke-dasharray="6 1"/>
          <path d="m32-14 8-1-1 4ZM168 7l-8-3-1 4ZM168 7l8-1-1 4ZM168 203l7-5 2 3ZM270 158l-7 1 2 3ZM270 158l5-4 3 3Z"/>
        </g>
        <g font-family="Liberation Serif, serif" font-weight="700" font-size="12" text-anchor="middle" fill="#000080">
          <path d="M83-11 117-6V7L83 2ZM221 10l34 5V28l-34-5ZM201 186l30-14 5 10-30 14Z" fill="#fff"/>
          <text transform="translate(99 2) rotate(8)">4.000</text><text transform="translate(237 23) rotate(8)">4.000</text><text transform="translate(219 186) rotate(-24)">5.000</text>
        </g>
        <g id="axis"><path d="M0 0 28 4" stroke="#f00000" stroke-width="2"/><path d="m26 1 9 5-10 2Z" fill="#c00"/><path d="M0 0-13 6" stroke="#0e0" stroke-width="2"/><path d="m-11 3-9 7 9-2Z" fill="#0b0"/><path d="M0 0v31" stroke="#00f" stroke-width="2"/><path d="m-3 30 3 9 3-9Z" fill="#00a"/>
          <g fill="none"><path d="m41 4 5 7M46 4l-5 7" stroke="#e00"/><path d="m-27 9 2 3 3-3M-25 12v4" stroke="#0e0"/><path d="M-2 45h5l-5 7h5" stroke="#0000a0"/></g></g>
        <use href="#axis" x="-247" y="483"/>
      </g></svg>
      <div class="ctx-menu" id="menu"></div>
      <div class="mark-box"></div>
    </section>
  </main>

  <footer class="status-strip d-flex align-items-center flex-shrink-0">
    <span class="status-text">Umožní zamknout resp. odemknout liniové rastry.</span>
    <button class="snap-key" style="width:57px">UCHOP</button><button class="snap-key" style="width:48px">RASTR</button><button class="snap-key ps-1" style="width:65px">KARTEZ</button><button class="snap-key" style="width:68px">OUCHOP</button><button class="snap-key" style="width:50px">VLINIE</button><button class="snap-key" style="width:33px">DXF</button>
    <span class="status-cell"></span><span class="status-cell ms-auto" style="width:87px"></span><span class="status-cell" style="width:74px"></span><span class="status-cell" style="width:74px"></span><span class="status-cell d-flex align-items-end justify-content-end" style="width:95px"><svg width="12" height="12"><path d="M9 2h2M5 6h2M9 6h2M1 10h2M5 10h2M9 10h2" stroke="#666b75" stroke-width="2"/></svg></span>
  </footer>
</div>

<script>
const ico = n => `<svg><use href="#${n}"/></svg>`;
// "|" separator, ":" grip, "v" drop-down arrow, "[]" load-case list, "!" pressed, "-" unavailable
function bar(id, spec) {
  document.getElementById(id).innerHTML = spec.split(' ').map(t => {
    if (t === '|') return '<span class="tool-sep"></span>';
    if (t === ':') return '<span class="grip-dots"></span>';
    if (t === 'v') return '<button class="tool-arrow" aria-label="Další"></button>';
    if (t === '[]') return '<span class="case-wrap"><select class="case-box" aria-label="Zatěžovací stav"></select></span>';
    const n = t.replace(/^[!-]/, '');
    return `<button class="tool-btn${t[0] === '!' ? ' is-on' : t[0] === '-' ? ' is-off' : ''}" aria-label="${n}">${ico(n)}</button>`;
  }).join('');
}
bar('bar1', ': new open cabo cabb save note print prev | undo redo | -selp -sele -selr selx -selw | !list tabl | ldnew [] -pv -nx -eyel -xxl -eyer -xxr | glas abac -abac2 : hand snap !plh plv plf -grd axes | cir rot mir -tie : scr');
bar('bar2', ': nod v lin mem v ply v | -sup -sul -suf | dim v com gui | surf v opn v bend v -sol cube1 v | comb v -lod -lodl -lodl -lods lodc v : grab zmw zmx wcub ccub | vwx vwy vwz vwn v micr v | blk v : -frm -tube | -isec -rain -rcub -supr -knif -note');

// small drawings laid over the yellow folders of the tree
const over = {
  dot:'<path d="M8 9h2v2H8Z" fill="#c00"/>', line:'<path d="m4 14 9-9" stroke="#444"/><path d="M3 13h2v2H3ZM12 4h2v2h-2Z" fill="#c00"/>',
  rgb:'<path d="M5 6h3v6H5Z" fill="#c22"/><path d="M9 6h4v3H9Z" fill="#22b"/><path d="M9 9h4v4H9Z" fill="#2a3"/>', plate:'<path d="m5 11 3-4 6 1-3 4Z" fill="#4f83c4" stroke="#2c4f80"/>',
  cube:'<path d="m5 7 4-1 4 1v5l-4 2-4-2Z" fill="#6b96cc" stroke="#2c4f80"/>', hole:'<path d="M5 7h8v6H5Z" fill="#5e8cc6" stroke="#2c4f80"/><path d="M8 9h2v2H8Z" fill="#fe8"/>',
  sup:'<path d="m9 7 4 6H5Z" fill="#1a9030"/><path d="M8 5h2v2H8Z" fill="#c00"/>', supl:'<path d="M4 8h10" stroke="#c00" stroke-width="2" stroke-dasharray="3 2"/><path d="M5 10h3v3H5ZM10 10h3v3h-3Z" fill="#1a9030"/>',
  supf:'<path d="m5 8 8-1v3l-4 4-4-3Z" fill="#1f7a4c"/>', hinge:'<path d="m5 9 3-2 2 2 3 1-2 2-4-1Z" fill="#dde4ee" stroke="#7f8896"/>',
  multi:'<ellipse cx="9" cy="10" rx="4" ry="2.500" fill="#446ab5"/><path d="M9 12c3 0 4-1 4-3" stroke="#c22" stroke-width="1.500" fill="none"/>', ibeam:'<path d="M4 7h4M6 7v6M4 13h4" stroke="#b22"/><path d="m9 7 5-2v6l-5 3Z" fill="#5679d8"/>',
  net:'<path d="M5 6h8v8H5ZM9 6v8M5 10h8" stroke="#345" fill="#8aa8c8"/>', cross:'<path d="m4 6 10 8M4 14l10-8" stroke="#222"/><path d="M3 5h3v3H3ZM12 5h3v3h-3ZM3 12h3v3H3ZM12 12h3v3h-3Z" fill="#c00"/>', zip:'<path d="M9 4v11" stroke="#444" stroke-width="2" stroke-dasharray="2 1"/><path d="M8 6h2v2H8Z" fill="#c00"/>',
  rel:'<path d="m4 8 8-1 2 2-7 2Z" fill="#87b4dc" stroke="#3b6188"/><path d="m4 12 8-1 2 1-7 2Z" fill="#5e8fc0"/>'
};
const leaves = [['Uzly','dot'],['Linie','line'],['Materiály','rgb'],['Plochy','plate'],['Tělesa','cube'],['Otvory','hole'],['Uzlové podpory','sup'],['Liniové podpory','supl'],['Plošné podpory','supf'],['Liniové klouby','hinge'],['Proměnné tloušťky','plate'],['Ortotropní plochy a membrány','multi'],['Průřezy','ibeam'],['Klouby na koncích prutu','hinge'],['Excentricity prutu','line'],['Dělení prutu','line'],['Pruty','line'],['Žebra','hinge'],['Podloží prutu','supl'],['Nelinearity prutu','zip'],['Sady prutů','line'],['Průniky ploch','cube'],['Zahuštění sítě prvků','net'],['Uzlová uvolnění'],['Typy liniového uvolnění'],['Liniová uvolnění','hinge'],['Typy plošného uvolnění','rel'],['Plošná uvolnění','rel'],['Spojení dvou prutů'],['Spoje'],['Uzlové vazby','cross']];
const box = shut => `<button${shut ? ' class="shut"' : ''} aria-label="${shut ? 'Rozbalit' : 'Sbalit'}"></button>`;
const leaf = (text, svg, kind, shut) => `<div class="tree-line"><span class="twig"></span><span class="twig vert"></span><span class="twig ${kind}">${shut ? box(true) : ''}</span>${svg}<span>${text}</span></div>`;
const branch = text => `<div class="tree-line"><span class="twig"></span><span class="twig fork">${box()}</span>${ico('fopn')}<span>${text}</span></div>`;
document.getElementById('tree').innerHTML =
  `<div class="tree-line fw-bold"><span class="twig stop">${box()}</span>${ico('root')}<span>4674* [Downloads]</span></div>` +
  branch('Údaje o modelu') +
  leaves.map(([t, o], i) => leaf(t, `<svg><use href="#fold"/>${over[o] || ''}</svg>`, i === leaves.length - 1 ? 'stop' : 'fork', t === 'Materiály')).join('') +
  branch('Zatěžovací stavy a kombinace') + leaf('Zatěžovací stavy', ico('load'), 'fork') + leaf('Kombinace zatížení', ico('combt'), 'fork');

// [text, icon, state]
const entries = [['Opakovat - Zamknout/odemknout liniové rastry','','key'],0,['Pohled','','sub'],['Uživatelský pohled','','sub'],0,['Zobrazit číslování','n123'],['Zobrazit zatížení','eyel','off'],['Zobrazit výsledky','eyer','off'],['Zobrazit předběžný form-finding','form','off'],0,['Zobrazit kóty','dimd'],['Zobrazit komentáře','coma'],['Zobrazit skryté objekty v pozadí','tick','set'],0,['Zobrazit drátěný nebo plný model','tick','set'],0,['Zamknout/odemknout vodicí linie','lock','set'],['Zamknout/odemknout liniové rastry','','hot'],['Umožnit funkci Drag &amp; Drop','drag','set'],0,['Automatické otáčení modelu','spin'],['Automaticky spojit linie/pruty','conn','set'],0,['Souřadný systém...','axes'],['Pracovní rovina, rastr/uchopení, ...','hand'],0,['Podrobný výběr...','selw','off'],0,['Barvy v grafice podle','','sub'],0,['Nastavení zobrazení...','disp']];
document.getElementById('menu').innerHTML = entries.map(e => e
  ? `<button class="ctx-item${e[2] === 'hot' ? ' is-hot' : ''}"${e[2] === 'off' ? ' disabled' : ''}><span class="ctx-ico${e[2] === 'set' ? ' is-set' : ''}">${e[1] ? ico(e[1]) : ''}</span><span class="flex-grow-1">${e[0]}</span>${e[2] === 'sub' ? '<span class="ctx-sub"></span>' : e[2] === 'key' ? '<span>Enter</span>' : ''}</button>`
  : '<div class="ctx-sep"></div>').join('');

// axonometric projection: one metre along X and Y, one storey along Z
const X = [34.55, 5.12], Y = [-19.92, 8.88], Z = 96;
const P = (x, y, z = 0) => [(x * X[0] + y * Y[0]).toFixed(1), (x * X[1] + y * Y[1] - z * Z).toFixed(1)];
const seg = (a, b) => `M${a}L${b}`;
let dots = '', grid = '', teal = '', wire = '', posts = '', nodes = '';
for (let i = -30; i <= 50; i++) for (let j = -30; j <= 30; j++) { const p = P(i, j).map(Math.round); if (p[0] > -310 && p[1] > -275) dots += `M${p}h1v1h-1Z`; }
for (let j = -30; j <= 30; j += 10) if (j) grid += seg(P(-30, j), P(50, j));
for (let i = -30; i <= 50; i += 10) if (i) grid += seg(P(i, -30), P(i, 30));
teal = seg(P(-30, 0), P(0, 0)) + seg(P(0, -30), P(0, 0)) + seg(P(12, 0), P(50, 0));
for (let z = 0; z < 3; z++) for (let k = 0; k < 4; k++) {
  wire += seg(P(0, k * 5, z), P(12, k * 5, z)) + seg(P(k * 4, 0, z), P(k * 4, 15, z));
  for (let m = 0; m < 4; m++) { const n = P(k * 4, m * 5, z); nodes += `<circle cx="${n[0]}" cy="${n[1]}" r="2"/>`; }
}
for (let a = 0; a < 4; a++) for (let b = 0; b < 4; b++) posts += seg(P(a * 4, b * 5), P(a * 4, b * 5, 2));
document.getElementById('lattice').innerHTML = `<path d="${grid}" stroke="#c8c8c8"/><path d="${teal}" stroke="#0f7f80" stroke-dasharray="7 1"/><path d="${dots}" fill="#000" shape-rendering="crispEdges"/>`;
document.getElementById('frame').innerHTML = `<path d="${wire}"/><path d="${posts}" stroke="#c8c8c8"/><g fill="#c3c3c3" stroke="none">${nodes}</g>`;
</script>
<script src="https://cdn.jsdelivr.net/npm/bootstrap@5.3.0/dist/js/bootstrap.bundle.min.js"></script>
</body>
</html>
